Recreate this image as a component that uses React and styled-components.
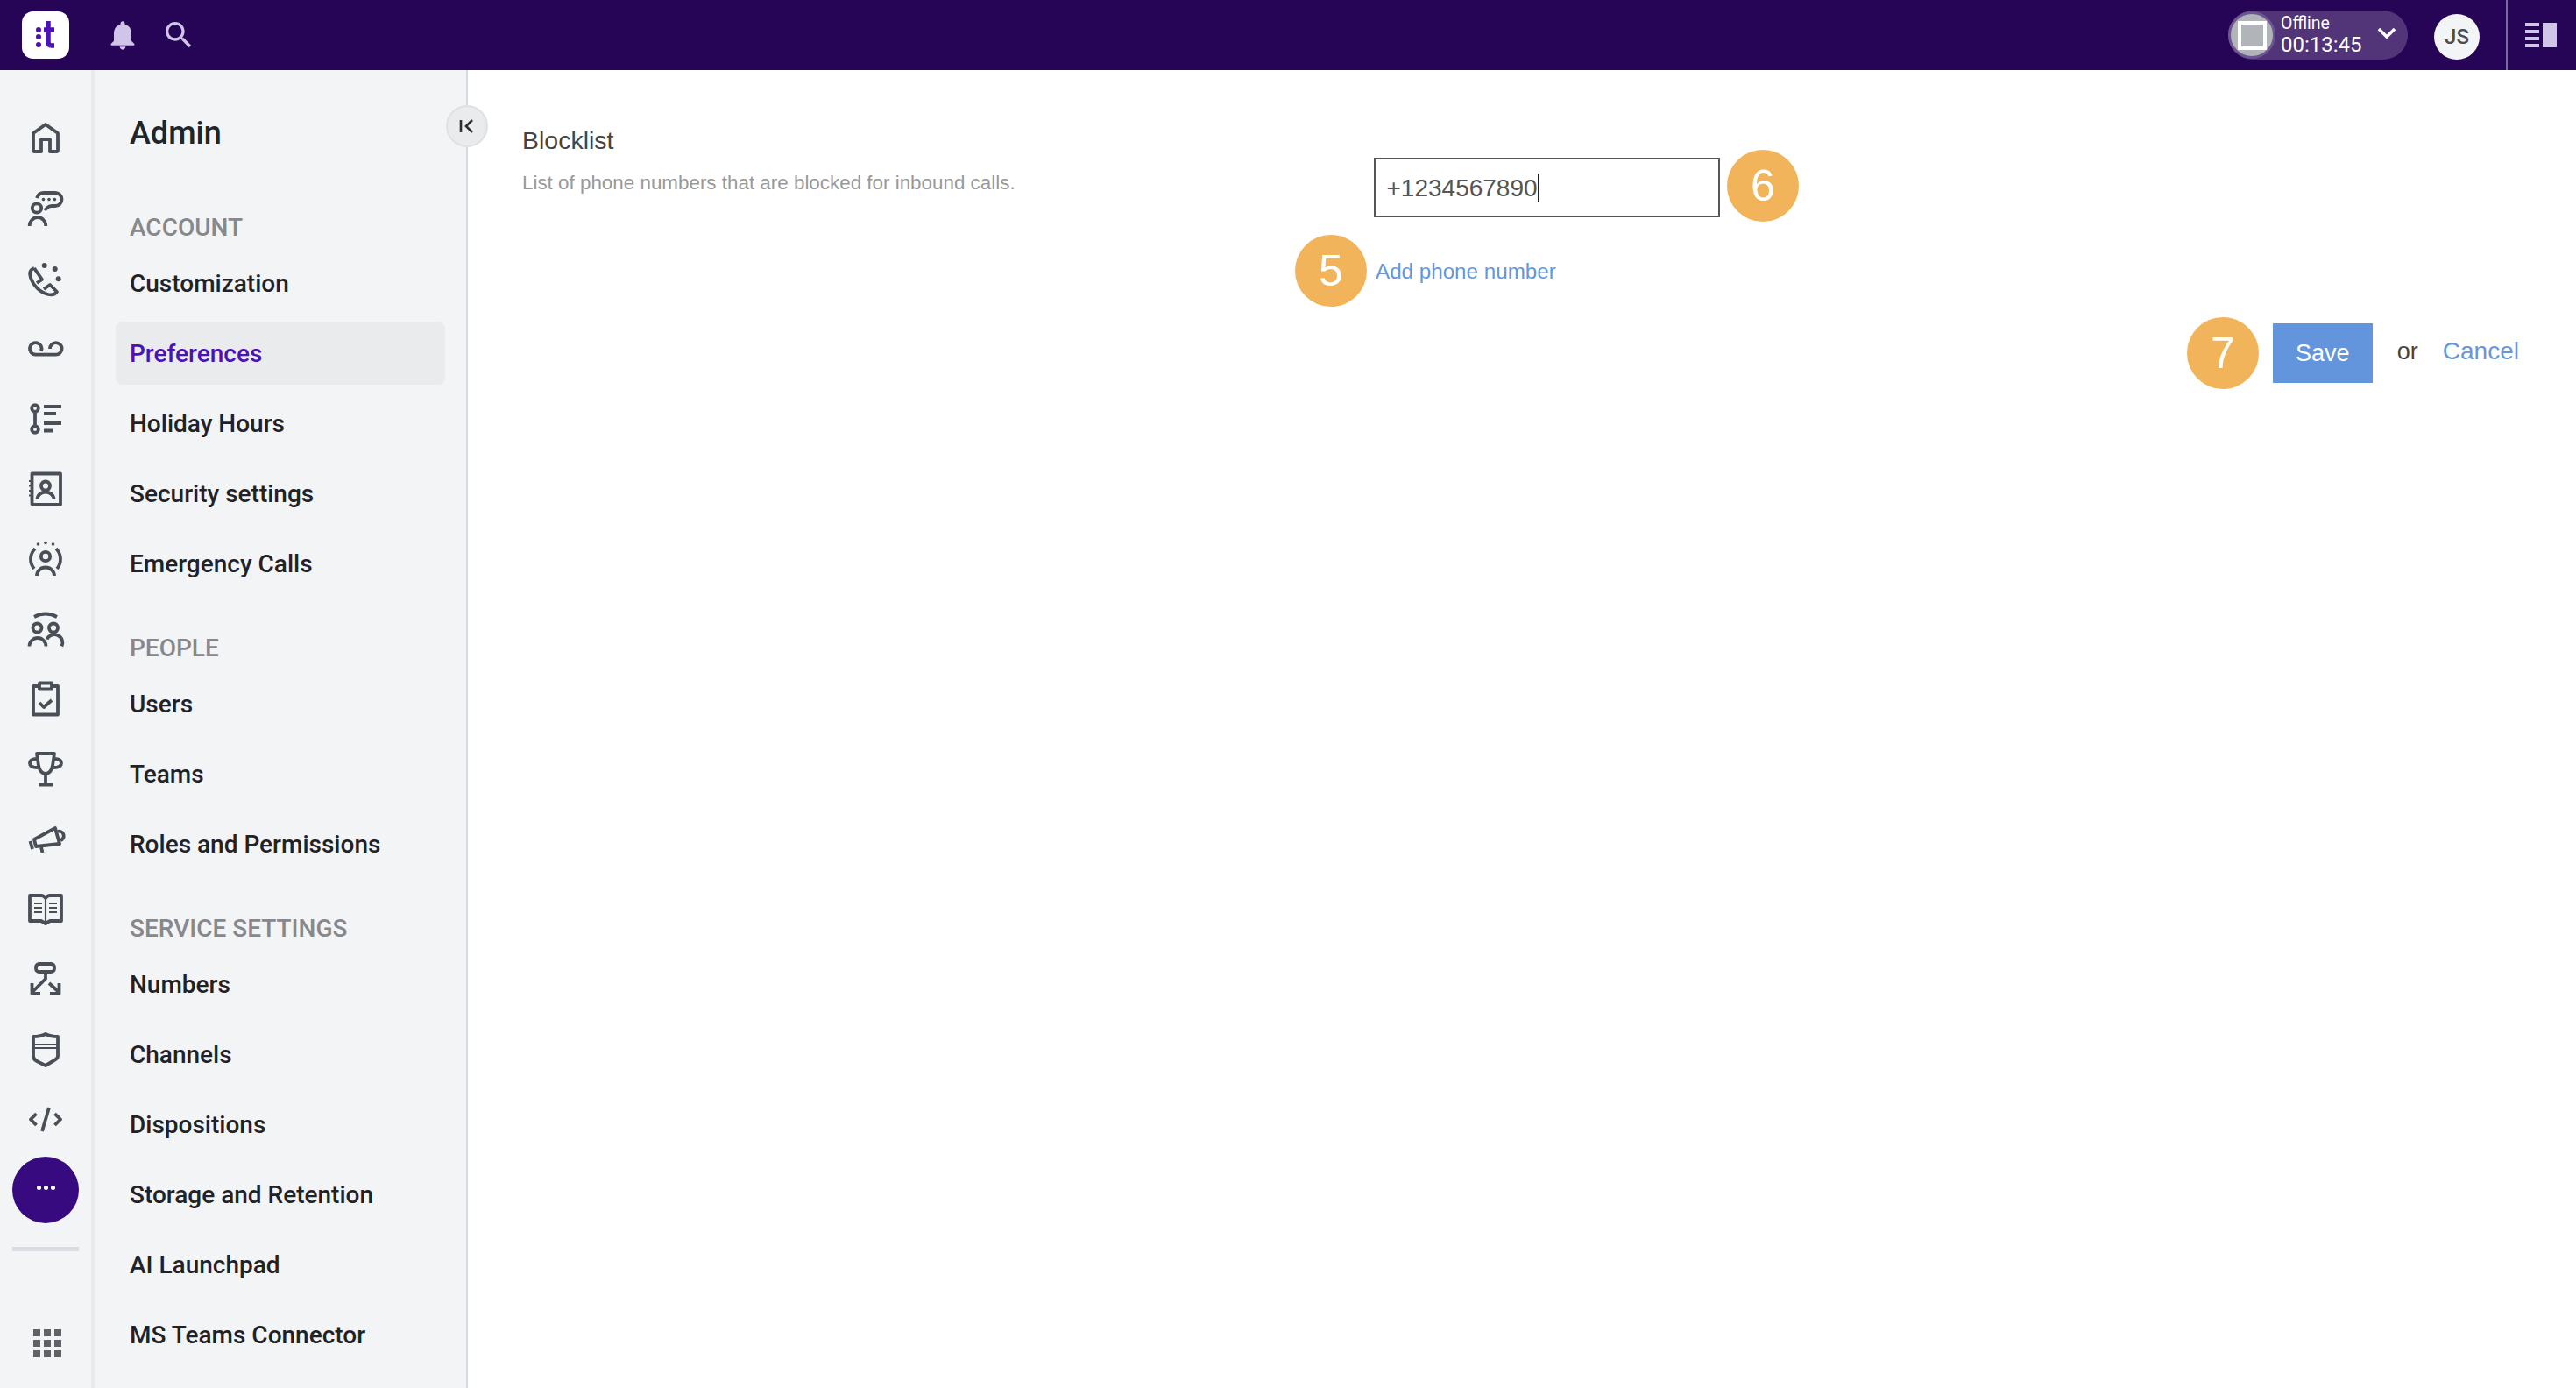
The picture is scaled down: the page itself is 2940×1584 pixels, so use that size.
import React from "react";
import styled, { createGlobalStyle } from "styled-components";

const Global = createGlobalStyle`
  html, body { margin: 0; padding: 0; background: #fff; }
  body { width: 2940px; height: 1584px; overflow: hidden; font-family: "Roboto", sans-serif; }
  * { box-sizing: border-box; }
`;

const Page = styled.div`
  width: 2940px; height: 1584px; display: flex; flex-direction: column; overflow: hidden;
`;
const Header = styled.header`
  height: 80px; flex: none; background: #260556; display: flex; align-items: center; padding-left: 25px;
`;
const Logo = styled.div`
  width: 54px; height: 54px; border-radius: 13px; background: #fff; flex: none;
  svg { display: block; }
`;
const HeadIcon = styled.svg`
  width: 40px; height: 40px; fill: #d0c4e8; flex: none; display: block; margin-left: ${p => p.$ml}px;
`;
const HeaderRight = styled.div`
  margin-left: auto; display: flex; align-items: center; height: 80px;
`;
const Pill = styled.div`
  width: 205px; height: 56px; border-radius: 28px; background: #523578; display: flex; align-items: center; position: relative;
`;
const StopCircle = styled.div`
  width: 54px; height: 54px; border-radius: 50%; background: #b1b4b8; border: 3px solid #6d5591; flex: none;
  display: flex; align-items: center; justify-content: center;
  &::after { content: ""; width: 25px; height: 25px; border: 4px solid #fff; }
`;
const TimerText = styled.div`
  margin-left: 6px; color: #fff; display: flex; flex-direction: column; width: 109px;
`;
const TimerLabel = styled.span`
  font-size: 19.5px; line-height: 23px;
`;
const TimerValue = styled.span`
  font-size: 24px; line-height: 27px; letter-spacing: 0;
`;
const Chevron = styled.svg`
  width: 24px; height: 14px; fill: none; stroke: #fff; stroke-width: 3.5; flex: none; margin-top: -4px;
`;
const Avatar = styled.div`
  width: 52px; height: 52px; border-radius: 50%; background: #f2f4f6; color: #4a4f56; margin-left: 30px; margin-top: 4px;
  display: flex; align-items: center; justify-content: center; font-size: 24px; font-weight: 500;
`;
const HeadDivider = styled.div`
  width: 2px; height: 80px; background: #7b6a9e; margin-left: 30px;
`;
const PanelToggle = styled.svg`
  width: 36px; height: 28px; fill: #d0c4e8; margin-left: 20px; margin-right: 22px; flex: none;
`;

const Body = styled.div`
  flex: 1; display: flex; min-height: 0;
`;
const Rail = styled.nav`
  width: 108px; flex: none; background: #f3f4f6; border-right: 4px solid #e8eaed; display: flex; flex-direction: column; align-items: center;
  padding-top: 38px;
`;
const RailSlot = styled.div`
  height: 80px; width: 100%; flex: none; display: flex; align-items: center; justify-content: center;
`;
const RailGlyph = styled.svg`
  width: 40px; height: 40px; fill: none; stroke: #4a4f57; stroke-width: 3.8; stroke-linecap: butt; stroke-linejoin: round; display: block; overflow: visible;
  .thin { stroke-width: 2.2; }
  .dot { fill: #4a4f57; stroke: none; }
`;
const MoreButton = styled.div`
  width: 76px; height: 76px; border-radius: 50%; background: #370a80; margin-top: 2px; flex: none;
  display: flex; align-items: center; justify-content: center; gap: 3px; padding-bottom: 6px;
`;
const MoreDot = styled.span`
  width: 5px; height: 5px; border-radius: 50%; background: #fff;
`;
const RailRule = styled.div`
  width: 76px; height: 5px; background: #d9dce0; margin-top: 27px; flex: none;
`;
const AppsGrid = styled.div`
  margin-top: 89px; margin-left: 4px; display: grid; grid-template-columns: repeat(3, 8px); grid-auto-rows: 8px; gap: 4px;
`;
const AppsCell = styled.span`
  background: #5f6368;
`;

const Sidebar = styled.aside`
  width: 426px; flex: none; background: #f3f4f6; border-right: 2px solid #d5d8dc; position: relative; padding: 48px 24px 0;
`;
const CollapseBtn = styled.button`
  position: absolute; right: -25px; top: 40px; width: 48px; height: 48px; border-radius: 50%; background: #e9ebed; border: 2px solid #dfe1e4; padding: 0;
  display: flex; align-items: center; justify-content: center;
  svg { width: 24px; height: 20px; fill: none; stroke: #2a2e33; stroke-width: 2.6; }
`;
const Title = styled.h1`
  margin: 0 0 68px 16px; font-size: 36px; line-height: 48px; font-weight: 500; color: #20252a;
`;
const Section = styled.section`
  margin-bottom: 45px;
`;
const SectionLabel = styled.div`
  font-size: 28px; line-height: 32px; font-weight: 500; color: #86888c; text-transform: uppercase; margin: 0 0 11px 16px;
`;
const NavList = styled.div`
  display: flex; flex-direction: column; gap: 8px;
`;
const NavItem = styled.div`
  height: 72px; display: flex; align-items: center; padding-left: 16px; border-radius: 8px; font-size: 28px; font-weight: 500;
  color: ${p => (p.$active ? "#4b12b5" : "#1f2328")};
  background: ${p => (p.$active ? "#e9ebed" : "transparent")};
`;

const Main = styled.main`
  flex: 1; min-width: 0; background: #fff; padding-top: 60px; font-family: "Liberation Sans", Arial, sans-serif;
`;
const FormRow = styled.div`
  display: grid; grid-template-columns: 972px 1fr; padding-left: 62px;
`;
const FieldTitle = styled.div`
  font-size: 28.5px; line-height: 40px; color: #444;
`;
const FieldHelp = styled.div`
  font-size: 22.4px; line-height: 28px; margin-top: 15px; color: #999;
`;
const FieldColumn = styled.div`
  padding-top: 40px;
`;
const InputWrap = styled.div`
  position: relative; width: 395px; height: 68px;
`;
const PhoneInput = styled.div`
  width: 100%; height: 100%; border: 2.5px solid #555; background: #fff; padding: 1px 0 0 12.5px; display: flex; align-items: center;
  font-size: 28px; color: #555;
  &::after { content: ""; width: 1.5px; height: 33px; background: #222; }
`;
const LinkRow = styled.div`
  position: relative; margin-top: 42px; height: 40px; padding-left: 2px; display: flex; align-items: center;
`;
const Link = styled.a`
  color: #6497dc; font-size: ${p => p.$size}px; line-height: 40px;
`;
const Badge = styled.div`
  position: absolute; left: ${p => p.$left}px; top: ${p => p.$top}px; width: 82px; height: 82px; border-radius: 50%; background: #f1b45a; color: #fff;
  display: flex; align-items: center; justify-content: center; font-size: 50px; line-height: 1;
`;
const Actions = styled.div`
  margin-top: 39px; padding-right: 65px; display: flex; justify-content: flex-end; align-items: center; gap: 28px; font-size: 27px;
`;
const SaveWrap = styled.div`
  position: relative; height: 68px;
`;
const SaveButton = styled.button`
  width: 114px; height: 68px; border: 0; background: #6295dc; color: #fff; font: inherit; font-size: 27px; padding: 0;
`;
const OrText = styled.span`
  color: #444; font-size: 27px; margin-top: -3px;
`;
const CancelLink = styled(Link)`
  margin-top: -5px;
`;

const ICONS = [
  <path d="M20 4L34 14V33.5a1.5 1.5 0 0 1-1.5 1.5H25V21H15V35H7.5A1.5 1.5 0 0 1 6 33.5V14Z" />,
  <>
    <circle cx="10" cy="19.5" r="5.2" />
    <path d="M1.7 40a9.3 10 0 0 1 18.6 0" />
    <path d="M10 8Q12 2 18 2H31a7.5 7.5 0 0 1 0 15H27q-3 0-5 2l-3 3" />
    <circle className="dot" cx="17.5" cy="9.6" r="1.8" /><circle className="dot" cx="24" cy="9.6" r="1.8" /><circle className="dot" cx="30.4" cy="9.6" r="1.8" />
  </>,
  <>
    <path d="M7 8L16 21L10 25M7 8C2 10 1 14 3 19C6 28 14 36 23 38C28 39 31 38 33 35L25 27L18 32" />
    <circle className="dot" cx="18.7" cy="5" r="3" /><circle className="dot" cx="30.7" cy="9" r="3" /><circle className="dot" cx="34.7" cy="20.3" r="3" />
  </>,
  <path d="M15 22.5A6.8 6.8 0 1 0 8.5 26.7H31.5A6.8 6.8 0 1 0 25 20" />,
  <>
    <circle cx="8" cy="8" r="3.8" /><circle cx="8" cy="32" r="3.8" />
    <path d="M8 12V28" />
    <path d="M18 6H38M18 14H32M18 25H38M18 33.5H28" />
  </>,
  <>
    <path d="M4.5 2.5H37V38H6a1.5 1.5 0 0 1-1.5-1.5Z" />
    <path d="M1 11H6M1 16.5H6M1 22H6M1 27.5H6" className="thin" />
    <circle cx="20" cy="16.5" r="5" />
    <path d="M10.5 32a9.5 8.5 0 0 1 19 0" />
  </>,
  <>
    <circle cx="20" cy="17" r="5.2" />
    <path d="M10 39a10 9.5 0 0 1 20 0" />
    <path d="M8 8A17 17 0 0 0 7 31M32 8A17 17 0 0 1 33 31" />
    <circle className="dot" cx="11.5" cy="3" r="1.8" /><circle className="dot" cx="20" cy="1.5" r="1.8" /><circle className="dot" cx="28.5" cy="3" r="1.8" />
  </>,
  <>
    <path d="M7 6Q20-1 33 6" />
    <circle cx="10.5" cy="18.5" r="5" /><circle cx="29" cy="18.5" r="5" />
    <path d="M1.5 39.5a9.5 9.5 0 0 1 19 0M21.5 31.5A9 9 0 0 1 38.5 39.5" />
  </>,
  <>
    <path d="M13 5H6V37.5H34V5H27" />
    <rect x="13" y="1.5" width="14" height="7" />
    <path d="M13 24l5 5l9-8" />
  </>,
  <>
    <path d="M10 2H30L28 16Q26 25 20 25Q14 25 12 16Z" />
    <path d="M20 25V37M12 37.5H28" />
    <path d="M10 8Q2 8 2 13Q2 18 11 18M30 8Q38 8 38 13Q38 18 29 18" />
  </>,
  <>
    <path d="M7 20L31 7L36 25L9 28Z" />
    <path d="M2.5 22L5 31M15 29L16.5 35M34 11a5 5 0 0 1 3 10" />
  </>,
  <>
    <path d="M2 4H15Q18 4 20 7Q22 4 25 4H38V33H25L20 36L15 33H2Z" />
    <path d="M20 7V34" className="thin" />
    <path d="M7 13H16M7 18H16M7 23H16M24 13H33M24 18H33M24 23H33" className="thin" />
  </>,
  <>
    <rect x="9" y="2" width="21" height="9" rx="3.5" />
    <path d="M20 11V19L5 34M24 24L35 34" />
    <path d="M4.5 24V36H14M35.5 24V36H25" />
  </>,
  <>
    <path d="M6 5Q14 5 20 2Q26 5 34 5V27Q34 30 30 32L20 38L10 33Q6 31 6 27Z" />
    <path d="M6 14H34M6 18H34" className="thin" />
  </>,
  <>
    <path d="M9.5 13L3 19.5L9.5 26M30.5 13L37 19.5L30.5 26" />
    <path d="M24 6L16 33" />
  </>,
];

const NAV = [
  { label: "Account", items: ["Customization", "Preferences", "Holiday Hours", "Security settings", "Emergency Calls"] },
  { label: "People", items: ["Users", "Teams", "Roles and Permissions"] },
  { label: "Service Settings", items: ["Numbers", "Channels", "Dispositions", "Storage and Retention", "AI Launchpad", "MS Teams Connector"] },
];

export default function App() {
  return (
    <Page>
      <Global />
      <Header>
        <Logo>
          <svg width="54" height="54" viewBox="0 0 54 54">
            <circle cx="19" cy="21" r="3" fill="#4a12b8" />
            <circle cx="19" cy="29" r="3" fill="#4a12b8" />
            <circle cx="19" cy="38" r="3" fill="#4a12b8" />
            <path d="M30 11V35Q30 39 34 39H37M25 21H37" fill="none" stroke="#4a12b8" strokeWidth="5.5" />
          </svg>
        </Logo>
        <HeadIcon $ml={41} viewBox="0 0 24 24">
          <path d="M12 22c1.1 0 2-.9 2-2h-4c0 1.1.89 2 2 2zm6-6v-5c0-3.07-1.64-5.64-4.5-6.32V4c0-.83-.67-1.5-1.5-1.5s-1.5.67-1.5 1.5v.68C7.63 5.36 6 7.92 6 11v5l-2 2v1h16v-1l-2-2z" />
        </HeadIcon>
        <HeadIcon $ml={24} viewBox="0 0 24 24">
          <path d="M15.5 14h-.79l-.28-.27C15.41 12.59 16 11.11 16 9.5 16 5.91 13.09 3 9.5 3S3 5.91 3 9.5 5.91 16 9.5 16c1.61 0 3.09-.59 4.23-1.57l.27.28v.79l5 4.99L20.49 19l-4.99-5zm-6 0C7.01 14 5 11.99 5 9.5S7.01 5 9.5 5 14 7.01 14 9.5 11.99 14 9.5 14z" />
        </HeadIcon>
        <HeaderRight>
          <Pill>
            <StopCircle />
            <TimerText>
              <TimerLabel>Offline</TimerLabel>
              <TimerValue>00:13:45</TimerValue>
            </TimerText>
            <Chevron viewBox="0 0 24 14"><path d="M3 2L12 11L21 2" /></Chevron>
          </Pill>
          <Avatar>JS</Avatar>
          <HeadDivider />
          <PanelToggle viewBox="0 0 36 28">
            <rect x="0" y="0" width="16" height="4" />
            <rect x="0" y="8" width="16" height="4" />
            <rect x="0" y="16" width="16" height="4" />
            <rect x="0" y="24" width="16" height="4" />
            <rect x="20" y="0" width="16" height="28" />
          </PanelToggle>
        </HeaderRight>
      </Header>
      <Body>
        <Rail>
          {ICONS.map((icon, i) => (
            <RailSlot key={i}>
              <RailGlyph viewBox="0 0 40 40">{icon}</RailGlyph>
            </RailSlot>
          ))}
          <MoreButton><MoreDot /><MoreDot /><MoreDot /></MoreButton>
          <RailRule />
          <AppsGrid>
            {Array.from({ length: 9 }, (_, i) => <AppsCell key={i} />)}
          </AppsGrid>
        </Rail>
        <Sidebar>
          <CollapseBtn aria-label="Collapse">
            <svg viewBox="0 0 24 20"><path d="M5 3V17M18 3L11 10L18 17" /></svg>
          </CollapseBtn>
          <Title>Admin</Title>
          {NAV.map(group => (
            <Section key={group.label}>
              <SectionLabel>{group.label}</SectionLabel>
              <NavList>
                {group.items.map(item => (
                  <NavItem key={item} $active={item === "Preferences"}>{item}</NavItem>
                ))}
              </NavList>
            </Section>
          ))}
        </Sidebar>
        <Main>
          <FormRow>
            <div>
              <FieldTitle>Blocklist</FieldTitle>
              <FieldHelp>List of phone numbers that are blocked for inbound calls.</FieldHelp>
            </div>
            <FieldColumn>
              <InputWrap>
                <PhoneInput>+1234567890</PhoneInput>
                <Badge $left={403} $top={-9}>6</Badge>
              </InputWrap>
              <LinkRow>
                <Badge $left={-90} $top={-22}>5</Badge>
                <Link $size={24.2}>Add phone number</Link>
              </LinkRow>
            </FieldColumn>
          </FormRow>
          <Actions>
            <SaveWrap>
              <Badge $left={-98} $top={-7}>7</Badge>
              <SaveButton>Save</SaveButton>
            </SaveWrap>
            <OrText>or</OrText>
            <CancelLink $size={28}>Cancel</CancelLink>
          </Actions>
        </Main>
      </Body>
    </Page>
  );
}
